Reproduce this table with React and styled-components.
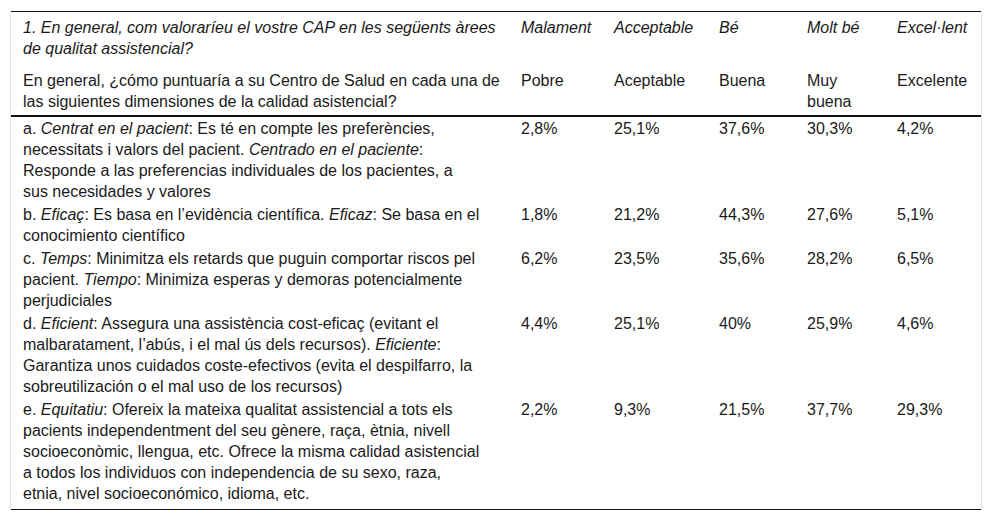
import React from 'react';
import styled, { createGlobalStyle } from 'styled-components';

const GlobalStyle = createGlobalStyle`
  body {
    margin: 0;
    background: #fff;
    font-family: "Liberation Sans", Arial, sans-serif;
    color: #1a1a1a;
  }
`;

const Wrapper = styled.div`
  margin: 11px 10px 0 10px;
  border-left: 1px solid #e4e4e4;
  border-right: 1px solid #e4e4e4;
`;

const Table = styled.table`
  width: 100%;
  border-collapse: collapse;
  table-layout: fixed;
  font-size: 16px;
  border-top: 1px solid #111;
  border-bottom: 1px solid #111;
`;

const Head = styled.thead`
  border-bottom: 2px solid #111;
`;

const Th = styled.th`
  text-align: left;
  vertical-align: top;
  font-weight: normal;
  font-style: ${(p) => (p.$italic ? 'italic' : 'normal')};
  line-height: 21px;
  padding: ${(p) => (p.$italic ? '5px 12px 5px' : '6px 12px 3px')};

  &:first-child {
    padding-right: 6px;
  }
`;

const Row = styled.tr`
  &:last-child td {
    padding-bottom: 5px;
  }
`;

const Td = styled.td`
  vertical-align: top;
  line-height: 21px;
  padding: 1px 12px 1px;

  &:first-child {
    padding-right: 25px;
  }
`;

const cols = ['498px', '93px', '105px', '88px', '90px', 'auto'];

const catHead = ['Malament', 'Acceptable', 'Bé', 'Molt bé', 'Excel·lent'];
const esHead = ['Pobre', 'Aceptable', 'Buena', 'Muy buena', 'Excelente'];

const rows = [
  {
    label: (
      <>
        a. <em>Centrat en el pacient</em>: Es té en compte les preferències, necessitats i valors del pacient.{' '}
        <em>Centrado en el paciente</em>: Responde a las preferencias individuales de los pacientes, a
        <br />
        sus necesidades y valores
      </>
    ),
    values: ['2,8%', '25,1%', '37,6%', '30,3%', '4,2%'],
  },
  {
    label: (
      <>
        b. <em>Eficaç</em>: Es basa en l’evidència científica. <em>Eficaz</em>: Se basa en el conocimiento científico
      </>
    ),
    values: ['1,8%', '21,2%', '44,3%', '27,6%', '5,1%'],
  },
  {
    label: (
      <>
        c. <em>Temps</em>: Minimitza els retards que puguin comportar riscos pel pacient. <em>Tiempo</em>: Minimiza
        esperas y demoras potencialmente perjudiciales
      </>
    ),
    values: ['6,2%', '23,5%', '35,6%', '28,2%', '6,5%'],
  },
  {
    label: (
      <>
        d. <em>Eficient</em>: Assegura una assistència cost-eficaç (evitant el malbaratament, l’abús, i el mal ús
        dels recursos). <em>Eficiente</em>: Garantiza unos cuidados coste-efectivos (evita el despilfarro, la
        sobreutilización o el mal uso de los recursos)
      </>
    ),
    values: ['4,4%', '25,1%', '40%', '25,9%', '4,6%'],
  },
  {
    label: (
      <>
        e. <em>Equitatiu</em>: Ofereix la mateixa qualitat assistencial a tots els pacients independentment del seu
        gènere, raça, ètnia, nivell socioeconòmic, llengua, etc. Ofrece la misma calidad asistencial a todos los
        individuos con independencia de su sexo, raza, etnia, nivel socioeconómico, idioma, etc.
      </>
    ),
    values: ['2,2%', '9,3%', '21,5%', '37,7%', '29,3%'],
  },
];

export default function App() {
  return (
    <>
      <GlobalStyle />
      <Wrapper>
        <Table>
          <colgroup>
            {cols.map((w, i) => (
              <col key={i} style={{ width: w }} />
            ))}
          </colgroup>
          <Head>
            <tr>
              <Th $italic>1. En general, com valoraríeu el vostre CAP en les següents àrees de qualitat assistencial?</Th>
              {catHead.map((h) => (
                <Th $italic key={h}>{h}</Th>
              ))}
            </tr>
            <tr>
              <Th>En general, ¿cómo puntuaría a su Centro de Salud en cada una de las siguientes dimensiones de la calidad asistencial?</Th>
              {esHead.map((h) => (
                <Th key={h}>{h}</Th>
              ))}
            </tr>
          </Head>
          <tbody>
            {rows.map((r, i) => (
              <Row key={i}>
                <Td>{r.label}</Td>
                {r.values.map((v, j) => (
                  <Td key={j}>{v}</Td>
                ))}
              </Row>
            ))}
          </tbody>
        </Table>
      </Wrapper>
    </>
  );
}
